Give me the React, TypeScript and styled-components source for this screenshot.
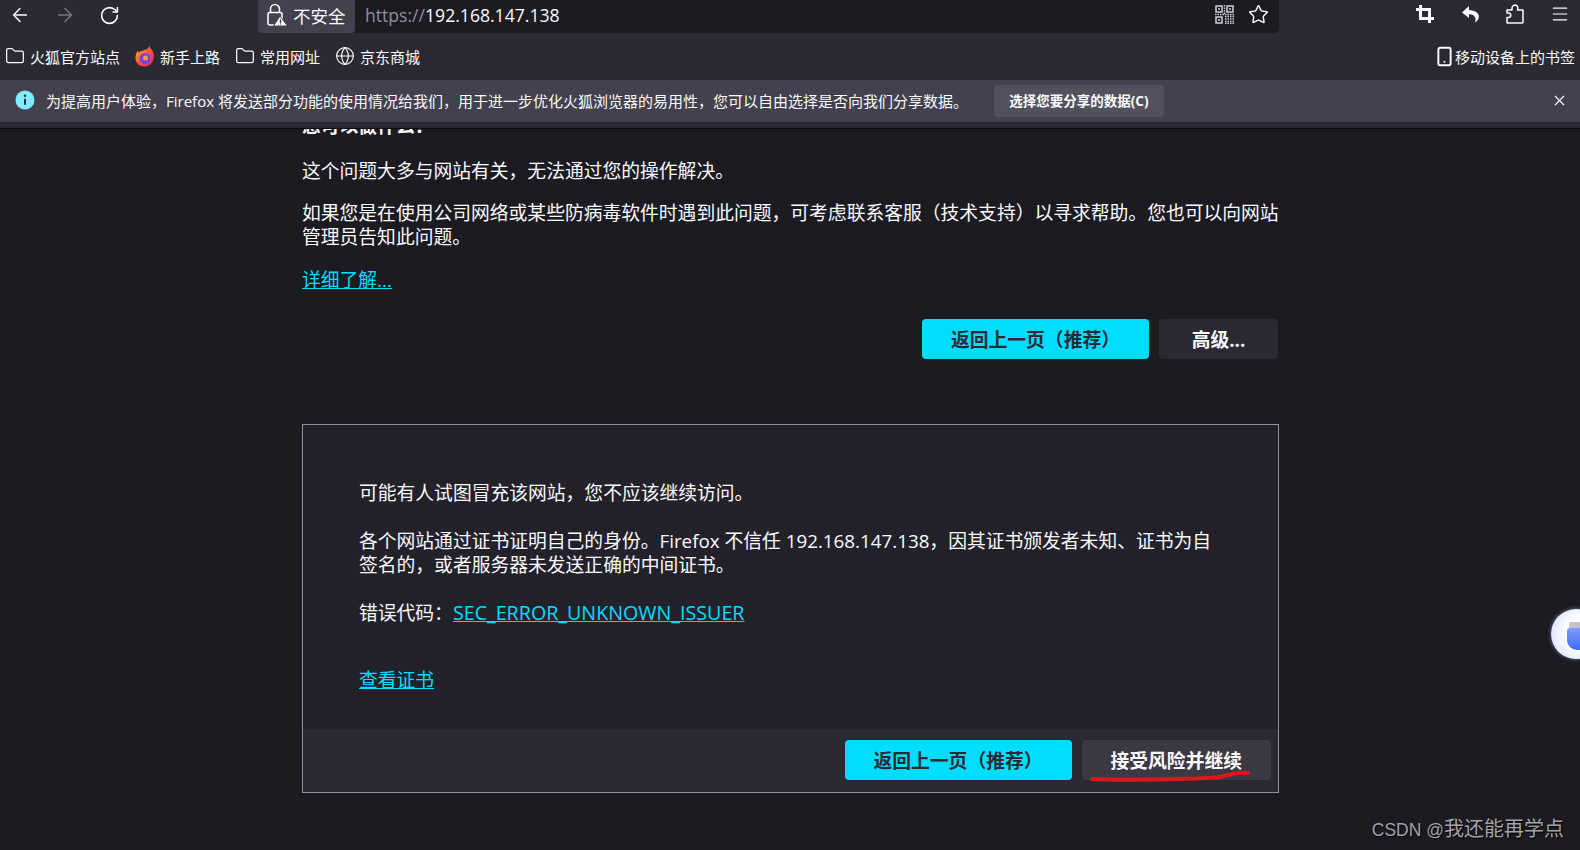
import styled, { createGlobalStyle } from 'styled-components';
import { ArrowLeft, ArrowRight, Folder, Globe, Menu, RotateCw, Smartphone, Star, X } from 'lucide-react';

const GlobalStyle = createGlobalStyle`
  html, body {
    margin: 0;
    height: 100%;
    overflow: hidden;
    background: #1c1b22;
  }
  body {
    font-family: "Open Sans", "Noto Sans CJK SC", sans-serif;
    color: #fbfbfe;
  }
`;

const Page = styled.div`
  position: relative;
  width: 1580px;
  height: 850px;
  display: flex;
  flex-direction: column;
  overflow: hidden;
`;

const Header = styled.header`
  background: #2b2a33;
  flex: none;
  border-bottom: 1px solid #0c0c0d;
`;

const NavRow = styled.div`
  display: flex;
  height: 34px;
  align-items: flex-start;
`;

const NavButtons = styled.div`
  width: 258px;
  height: 30px;
  display: flex;
  align-items: center;
  gap: 23px;
  padding-left: 9px;
  box-sizing: border-box;
`;

const NavIcon = styled.span<{ $dim?: boolean }>`
  display: flex;
  color: ${(p) => (p.$dim ? '#77767f' : '#fbfbfe')};
`;

const UrlBar = styled.div`
  width: 1021px;
  height: 33px;
  background: #1c1b22;
  border-radius: 0 0 5px 5px;
  display: flex;
  align-items: center;
  box-sizing: border-box;
  padding-right: 10px;
`;

const SecurityPill = styled.div`
  width: 97px;
  height: 33px;
  background: #42414d;
  border-radius: 0 0 4px 4px;
  display: flex;
  align-items: center;
  gap: 5px;
  padding: 0 0 3px 9px;
  box-sizing: border-box;
  font-size: 17.5px;
  flex: none;
`;

const UrlText = styled.div`
  margin: 0 0 4px 10px;
  flex: 1;
  font-size: 17.6px;
  color: #fbfbfe;
`;

const UrlScheme = styled.span`
  color: #8f8f9d;
`;

const UrlActions = styled.div`
  display: flex;
  align-items: center;
  gap: 14px;
  margin-bottom: 4px;
`;

const RightTools = styled.div`
  margin-left: auto;
  height: 28px;
  display: flex;
  align-items: center;
  gap: 26px;
  padding-right: 10px;
  color: #fbfbfe;
`;

const BookmarkRow = styled.div`
  height: 46px;
  display: flex;
  align-items: center;
  padding: 0 5px 2px 5px;
  box-sizing: border-box;
  font-size: 15px;
`;

const Bookmark = styled.div<{ $pushRight?: boolean }>`
  display: flex;
  align-items: center;
  gap: 5px;
  margin-right: 15px;
  ${(p) => p.$pushRight && 'margin-left: auto; margin-right: 0; gap: 0;'}
`;

const NoticeBar = styled.div`
  height: 42px;
  background: #42414d;
  display: flex;
  align-items: center;
  padding: 0 0 2px 15px;
  box-sizing: border-box;
  font-size: 15px;
`;

const NoticeGap = styled.div`
  height: 6px;
  background: #2b2a33;
`;

const NoticeText = styled.span`
  margin-left: 11px;
`;

const NoticeButton = styled.button`
  margin: 2px 0 0 26px;
  width: 170px;
  height: 32px;
  border: none;
  border-radius: 4px;
  background: #52525e;
  color: #fbfbfe;
  font: bold 13.5px "Open Sans", "Noto Sans CJK SC", sans-serif;
  padding: 0 0 2px;
`;

const NoticeClose = styled.span`
  margin-left: auto;
  margin-right: 12px;
  display: flex;
`;

const Main = styled.main`
  flex: 1;
  overflow: hidden;
  padding-left: 302px;
`;

const Column = styled.div`
  width: 977px;
  margin-top: -15px;
  font-size: 18.8px;
  line-height: 24px;
`;

const Heading = styled.div`
  font-weight: bold;
  margin-bottom: 21px;
`;

const Para = styled.p<{ $gap?: number }>`
  margin: 0 0 ${(p) => p.$gap ?? 18}px;
`;

const TextLink = styled.a`
  color: #00ddff;
  text-decoration: underline;
`;

const CodeLink = styled(TextLink)`
  font-size: 19.7px;
`;

const ButtonRow = styled.div`
  margin-top: 27px;
  padding-right: 1px;
  display: flex;
  justify-content: flex-end;
  gap: 10px;
`;

const Button = styled.button<{ $variant?: 'primary' | 'muted' | 'raised' }>`
  height: 40px;
  padding: 0 29px 1px;
  border: none;
  border-radius: 4px;
  font: bold 18.8px "Open Sans", "Noto Sans CJK SC", sans-serif;
  color: ${(p) => (p.$variant === 'primary' ? '#2b2a33' : '#fbfbfe')};
  background: ${(p) =>
    p.$variant === 'primary' ? '#00ddff' : p.$variant === 'raised' ? '#3a3944' : '#2b2a33'};
  min-width: ${(p) => (p.$variant === 'muted' ? '119px' : 'auto')};
`;

const AdvancedBox = styled.section`
  margin-top: 65px;
  height: 369px;
  box-sizing: border-box;
  border: 1px solid #8f8f9d;
  background: #23222b;
  display: flex;
  flex-direction: column;
`;

const BoxBody = styled.div`
  flex: 1;
  padding: 56px 56px 0;
`;

const BoxFooter = styled.div`
  height: 63px;
  background: #2b2a33;
  display: flex;
  justify-content: flex-end;
  gap: 10px;
  padding: 11px 7px 0 0;
  box-sizing: border-box;
`;

const ScribbleWrap = styled.div`
  position: relative;
  display: flex;
`;

const Scribble = styled.svg`
  position: absolute;
  left: 8px;
  top: 26px;
  pointer-events: none;
`;

const UsbWidget = styled.div`
  position: absolute;
  right: -21px;
  top: 609px;
  width: 50px;
  height: 50px;
  border-radius: 50%;
  background: radial-gradient(circle at 60% 50%, #ffffff 40%, #c9d8ff 100%);
  box-shadow: 0 0 4px rgba(190, 210, 255, 0.5);
`;

const UsbPlug = styled.div`
  position: absolute;
  left: 18px;
  top: 13px;
  width: 20px;
  height: 8px;
  background: #c4c4c8;
  border-radius: 2px 2px 0 0;
`;

const UsbBody = styled.div`
  position: absolute;
  left: 16px;
  top: 19px;
  width: 22px;
  height: 22px;
  border-radius: 3px 3px 10px 10px;
  background: linear-gradient(180deg, #7f9cf5, #3f6cff);
`;

const Watermark = styled.div`
  position: absolute;
  right: 16px;
  bottom: 8px;
  font: 20px "Liberation Sans", "Noto Sans CJK SC", sans-serif;
  color: #a3a3a6;
  text-shadow: 1px 1px 1px #000;
`;

const WatermarkLatin = styled.span`
  font-size: 17.5px;
`;

const LockWarnIcon = () => (
  <svg width="21" height="24" viewBox="0 0 21 24" fill="none">
    <rect x="1" y="9.5" width="14" height="12.5" rx="2" stroke="#fbfbfe" strokeWidth="1.6" />
    <path d="M3.5 9.5V6a4.5 4.5 0 0 1 9 0v3.5" stroke="#fbfbfe" strokeWidth="1.6" />
    <path d="M13 13 20.5 23H6.5Z" fill="#fbfbfe" stroke="#42414d" strokeWidth="1" />
    <path d="M13.5 16.5v3.2M13.5 20.6v1" stroke="#2b2a33" strokeWidth="1.2" />
  </svg>
);

const QrIcon = () => (
  <svg width="19" height="19" viewBox="0 0 19 19" fill="none" stroke="#cfcfd8" strokeWidth="1.5">
    <rect x="1" y="1" width="6" height="6" />
    <rect x="12" y="1" width="6" height="6" />
    <rect x="1" y="12" width="6" height="6" />
    <path d="M3 4h2M14 4h2M3 15h2" />
    <path d="M9.500 0v9M0 9.500h19M10 11.500h9M10 14h9M10 16.500h9M10 18.500h9" strokeDasharray="1.500 1" />
  </svg>
);

const CropIcon = () => (
  <svg width="20" height="20" viewBox="0 0 20 20" fill="none" stroke="#fbfbfe" strokeWidth="3">
    <path d="M5.5 1v13.5H19" />
    <path d="M1 5.5h13.5V19" />
  </svg>
);

const UndoIcon = () => (
  <svg width="19" height="19" viewBox="0 0 19 19" fill="#fbfbfe">
    <path d="M8 1 1 7.5 8 13V9.2c3.4 0 6 1.3 6.6 5 .1.9-.3 2.4-1.2 3.3 3-1 4.6-3.6 4.4-6.3C17.500 7.500 13.500 5.200 8 5.300Z" />
  </svg>
);

const PuzzleIcon = () => (
  <svg width="18" height="20" viewBox="0 0 18 20" fill="none" stroke="#fbfbfe" strokeWidth="1.5" strokeLinejoin="round">
    <path d="M1 19V13.500h1.500a2 2 0 0 0 0-4.500H1V6h5V4a3 3 0 0 1 5.500-1.500c.4.700.3 2.300.1 3.500H16.500a.5.5 0 0 1 .5.500V18a1 1 0 0 1-1 1Z" />
  </svg>
);

const InfoIcon = () => (
  <svg width="20" height="20" viewBox="0 0 20 20">
    <circle cx="10" cy="10" r="9.500" fill="#80ebff" />
    <rect x="9" y="8.500" width="2" height="6.500" rx="1" fill="#2b2a33" />
    <circle cx="10" cy="5.800" r="1.200" fill="#2b2a33" />
  </svg>
);

const FirefoxIcon = () => (
  <svg width="20" height="22" viewBox="0 0 20 22">
    <defs>
      <linearGradient id="fxFlame" x1="0" y1="0" x2="1" y2="1">
        <stop offset="0" stopColor="#ffbd2e" />
        <stop offset="0.500" stopColor="#ff5a36" />
        <stop offset="1" stopColor="#e31587" />
      </linearGradient>
    </defs>
    <path d="M14 .5c.6 2.500 3.500 4 4.500 7.500 1.300 4.500-.5 13-8.500 13.500C4 21.800.5 17.500.5 13c0-2.500.8-5.500 2.500-7.500 0 1.200.5 2 1 2.500C5 5.500 8 6 9.500 5 12.500 4.200 14.200 3 14 .5Z" fill="url(#fxFlame)" />
    <circle cx="10" cy="13.500" r="5.500" fill="#7542e5" />
    <circle cx="10.500" cy="13" r="2.500" fill="#ff9a3c" />
  </svg>
);

const App = () => {
  return (
    <Page>
      <GlobalStyle />
      <Header>
        <NavRow>
          <NavButtons>
            <NavIcon><ArrowLeft size={22} strokeWidth={1.6} /></NavIcon>
            <NavIcon $dim><ArrowRight size={22} strokeWidth={1.6} /></NavIcon>
            <NavIcon><RotateCw size={21} strokeWidth={1.8} /></NavIcon>
          </NavButtons>
          <UrlBar>
            <SecurityPill>
              <LockWarnIcon />
              不安全
            </SecurityPill>
            <UrlText>
              <UrlScheme>https://</UrlScheme>192.168.147.138
            </UrlText>
            <UrlActions>
              <QrIcon />
              <Star size={21} strokeWidth={1.6} color="#fbfbfe" />
            </UrlActions>
          </UrlBar>
          <RightTools>
            <CropIcon />
            <UndoIcon />
            <PuzzleIcon />
            <Menu size={20} strokeWidth={1.4} />
          </RightTools>
        </NavRow>
        <BookmarkRow>
          <Bookmark><Folder size={20} strokeWidth={1.5} />火狐官方站点</Bookmark>
          <Bookmark><FirefoxIcon />新手上路</Bookmark>
          <Bookmark><Folder size={20} strokeWidth={1.5} />常用网址</Bookmark>
          <Bookmark><Globe size={20} strokeWidth={1.4} />京东商城</Bookmark>
          <Bookmark $pushRight><Smartphone size={21} strokeWidth={2.2} />移动设备上的书签</Bookmark>
        </BookmarkRow>
        <NoticeBar>
          <InfoIcon />
          <NoticeText>为提高用户体验，Firefox 将发送部分功能的使用情况给我们，用于进一步优化火狐浏览器的易用性，您可以自由选择是否向我们分享数据。</NoticeText>
          <NoticeButton>选择您要分享的数据(C)</NoticeButton>
          <NoticeClose><X size={17} strokeWidth={1.6} /></NoticeClose>
        </NoticeBar>
        <NoticeGap />
      </Header>
      <Main>
        <Column>
          <Heading>您可以做什么：</Heading>
          <Para>这个问题大多与网站有关，无法通过您的操作解决。</Para>
          <Para $gap={19}>如果您是在使用公司网络或某些防病毒软件时遇到此问题，可考虑联系客服（技术支持）以寻求帮助。您也可以向网站管理员告知此问题。</Para>
          <TextLink href="#more">详细了解...</TextLink>
          <ButtonRow>
            <Button $variant="primary">返回上一页（推荐）</Button>
            <Button $variant="muted">高级...</Button>
          </ButtonRow>
          <AdvancedBox>
            <BoxBody>
              <Para $gap={24}>可能有人试图冒充该网站，您不应该继续访问。</Para>
              <Para $gap={24}>各个网站通过证书证明自己的身份。Firefox 不信任 192.168.147.138，因其证书颁发者未知、证书为自签名的，或者服务器未发送正确的中间证书。</Para>
              <Para $gap={43}>错误代码：<CodeLink href="#code">SEC_ERROR_UNKNOWN_ISSUER</CodeLink></Para>
              <TextLink href="#cert">查看证书</TextLink>
            </BoxBody>
            <BoxFooter>
              <Button $variant="primary">返回上一页（推荐）</Button>
              <ScribbleWrap>
                <Button $variant="raised">接受风险并继续</Button>
                <Scribble width="165" height="16" viewBox="0 0 165 16" fill="none">
                  <path d="M2 13c30 1.500 70 .5 105-.5 8-.5 14-.5 20-1 8-1 12-4 22-4.500 4-.2 6-.2 9-.2" stroke="#e0161e" strokeWidth="4" strokeLinecap="round" />
                </Scribble>
              </ScribbleWrap>
            </BoxFooter>
          </AdvancedBox>
        </Column>
      </Main>
      <UsbWidget>
        <UsbPlug />
        <UsbBody />
      </UsbWidget>
      <Watermark><WatermarkLatin>CSDN @</WatermarkLatin>我还能再学点</Watermark>
    </Page>
  );
};

export default App;
